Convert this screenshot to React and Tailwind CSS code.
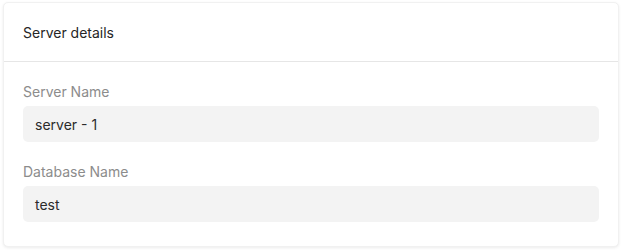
export default function App() {
  const fields = [
    { label: "Server Name", value: "server - 1" },
    { label: "Database Name", value: "test" },
  ];

  return (
    <div
      className="min-h-screen bg-white pt-[2px] pl-[3px]"
      style={{ fontFamily: "Inter, 'Noto Sans', sans-serif" }}
    >
      <div className="w-[616px] bg-white rounded-[5px] border border-[#f1f1f1] shadow-[0_1px_3px_rgba(0,0,0,0.08)]">
        {/* Header */}
        <div className="h-[58px] flex items-center px-[19px]">
          <h2 className="text-[14px] text-[#262626] font-normal">
            Server details
          </h2>
        </div>
        <div className="h-px bg-[#e6e6e6]" />

        {/* Campos */}
        <div className="px-[19px] pt-5 pb-6">
          {fields.map((f, i) => (
            <div key={f.label} className={i > 0 ? "mt-5" : ""}>
              <label className="block text-[14px] leading-5 text-[#8c8c8c]">
                {f.label}
              </label>
              <div className="mt-1 h-9 flex items-center px-3 rounded-[5px] bg-[#f3f3f3] text-[14px] text-[#2b2b2b]">
                {f.value}
              </div>
            </div>
          ))}
        </div>
      </div>
    </div>
  );
}
